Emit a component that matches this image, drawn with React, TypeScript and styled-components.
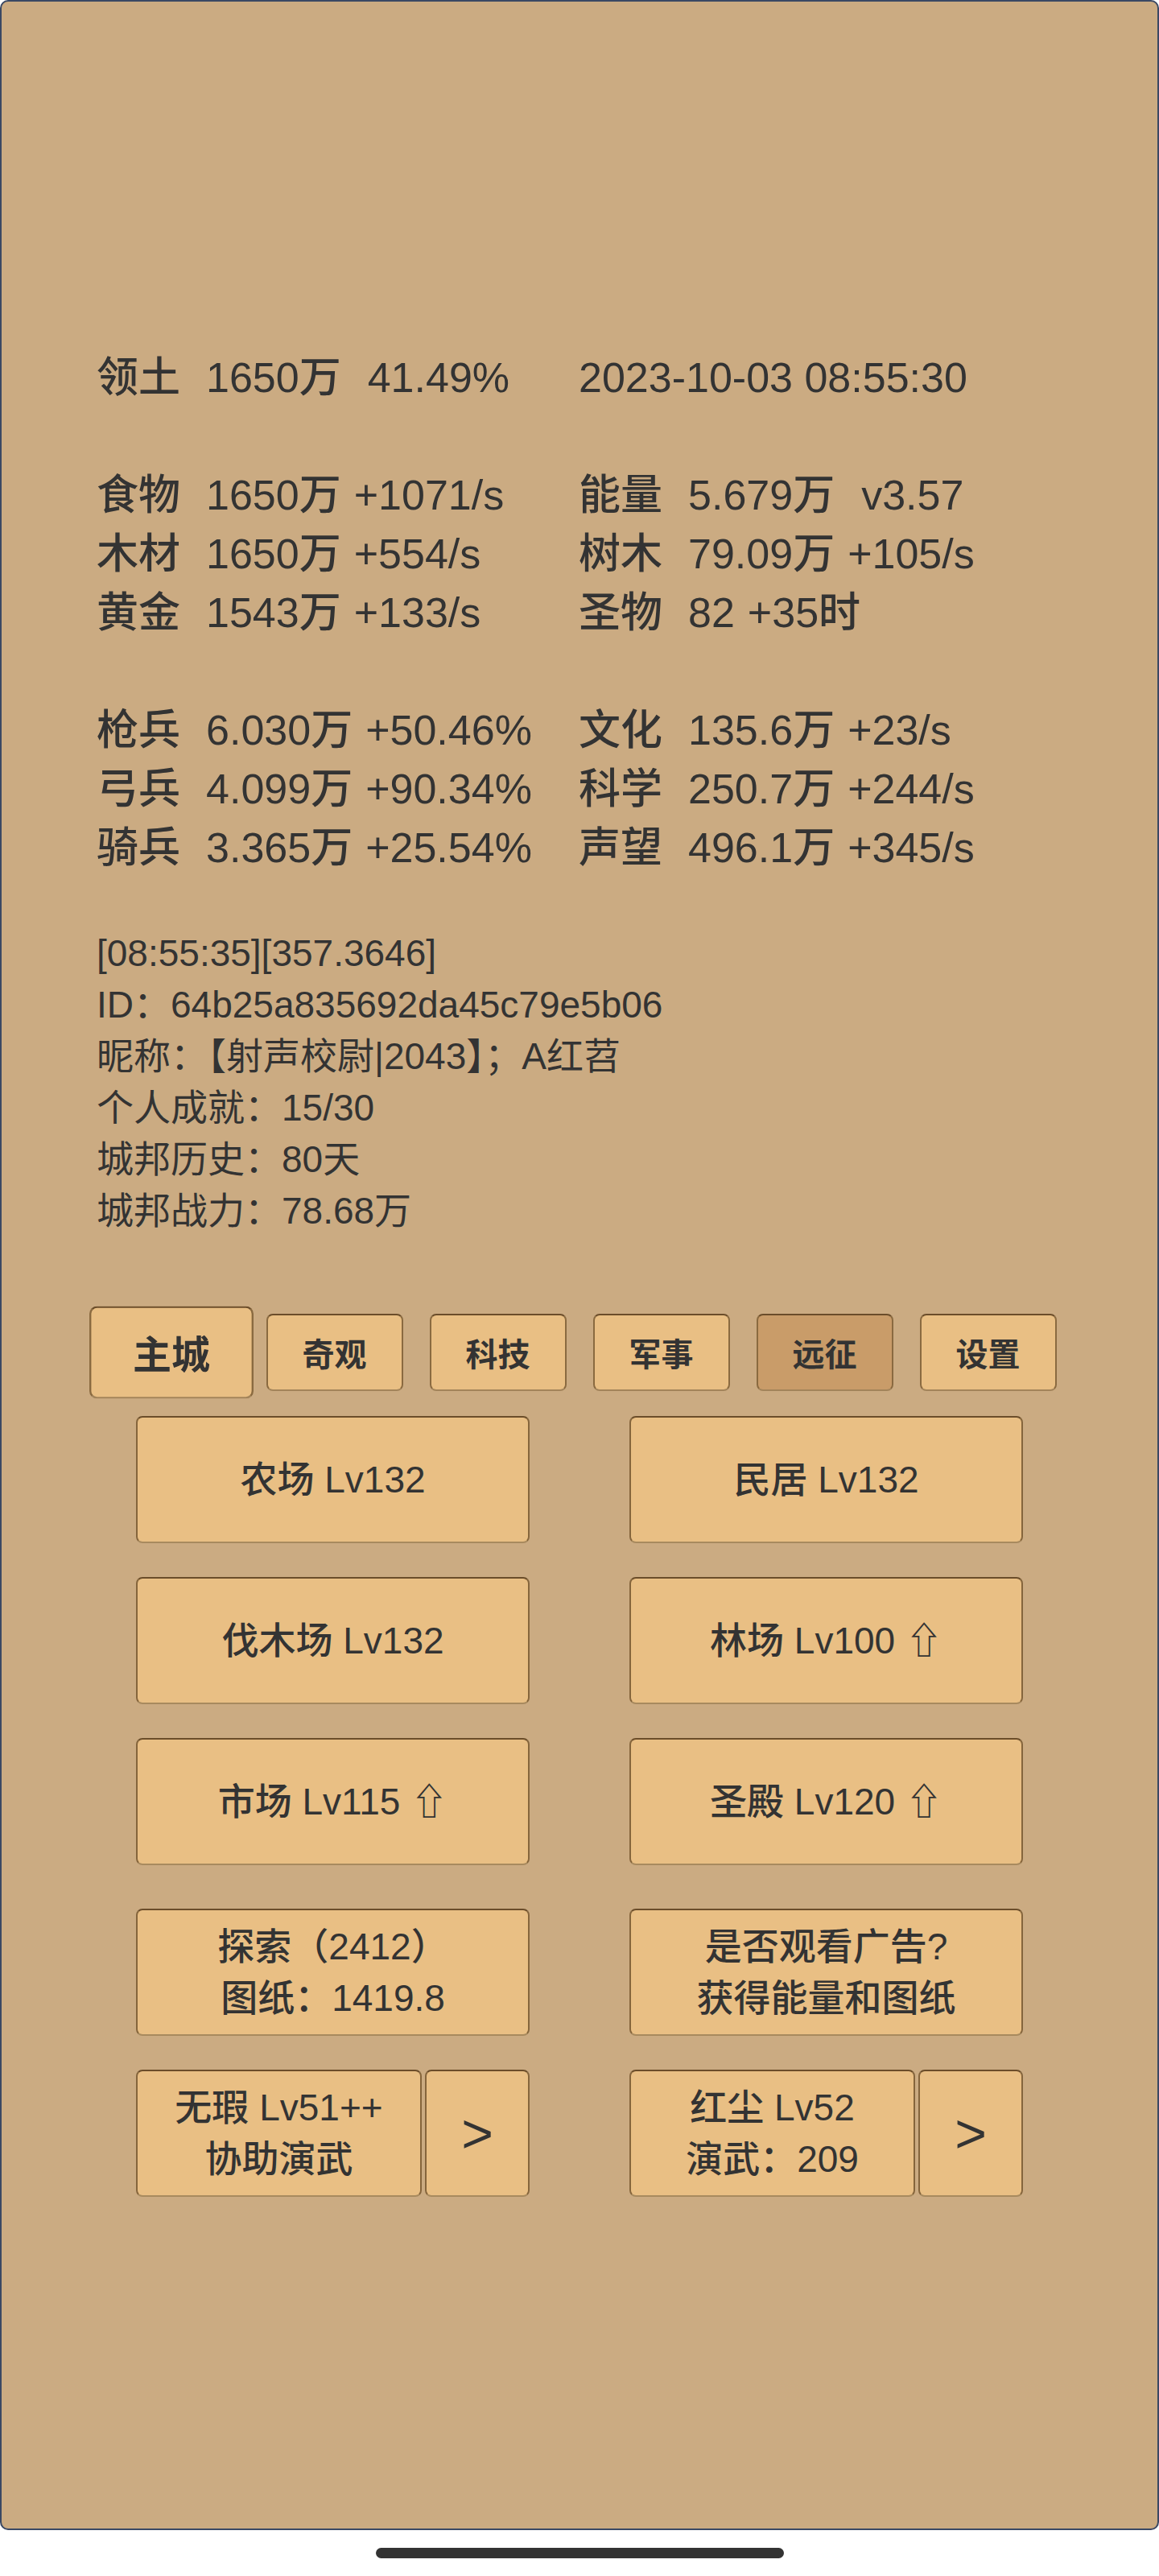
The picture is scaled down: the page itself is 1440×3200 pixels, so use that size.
import React from 'react';
import styled, { createGlobalStyle } from 'styled-components';

const GlobalStyle = createGlobalStyle`
    html, body {
        margin: 0;
        padding: 0;
        background: #ffffff;
    }
    body {
        font-family: "Liberation Sans", "Noto Sans CJK SC", sans-serif;
        color: #333333;
    }
    * {
        box-sizing: border-box;
    }
`;

const Page = styled.div`
    width: 1440px;
`;

const Screen = styled.div`
    height: 3143px;
    border: 2px solid #3a4864;
    border-radius: 10px;
    background: #cbab82;
    padding-top: 431px;
`;

const Stats = styled.div`
    padding-left: 118px;
    font-size: 52px;
    font-weight: 500;
    line-height: 73px;
`;

const StatGroup = styled.div`
    & + & {
        margin-top: 73px;
    }
`;

const StatRow = styled.div`
    display: grid;
    grid-template-columns: 599px auto;
    white-space: pre;
`;

const Cell = styled.div`
    display: flex;
`;

const Label = styled.span`
    margin-right: 32px;
`;

const Extra = styled.span<{ $gap: number }>`
    margin-left: ${(p) => p.$gap}px;
`;

const Info = styled.div`
    margin-top: 62px;
    padding-left: 118px;
    font-size: 46px;
    line-height: 64px;
`;

const Tabs = styled.div`
    display: flex;
    justify-content: center;
    gap: 33px;
    margin-top: 96px;
`;

const Tab = styled.button<{ $active?: boolean; $dim?: boolean }>`
    width: 170px;
    height: 96px;
    padding: 0;
    font: inherit;
    font-size: 40px;
    font-weight: bold;
    color: #333333;
    background: ${(p) => (p.$dim ? '#c99c69' : '#e9bf84')};
    border: 2px solid #8a6a40;
    border-top-color: #6b4d2a;
    border-bottom-color: #a3845a;
    border-radius: 8px;
    transform: ${(p) => (p.$active ? 'scale(1.2)' : 'none')};
`;

const ButtonGrid = styled.div<{ $top: number }>`
    display: grid;
    grid-template-columns: repeat(2, 489px);
    justify-content: center;
    column-gap: 124px;
    row-gap: 42px;
    margin-top: ${(p) => p.$top}px;
`;

const Split = styled.div`
    display: flex;
    gap: 4px;
`;

const GameButton = styled.button`
    flex: 1;
    height: 158px;
    padding: 0;
    display: flex;
    flex-direction: column;
    align-items: center;
    justify-content: center;
    font: inherit;
    font-size: 46px;
    font-weight: 500;
    line-height: 64px;
    color: #333333;
    background: #e9bf84;
    border: 2px solid #85653c;
    border-top-color: #6b4d2a;
    border-bottom-color: #a88a5e;
    border-radius: 8px;
    white-space: pre;
`;

const ArrowButton = styled(GameButton)`
    flex: 0 0 130px;
    font-size: 68px;
`;

const HomeArea = styled.div`
    height: 57px;
    display: flex;
    align-items: center;
    justify-content: center;
`;

const HomeBar = styled.div`
    width: 507px;
    height: 13px;
    border-radius: 7px;
    background: #333333;
`;

type StatCell = { label?: string; value: string; extra?: string; gap?: number };

const statGroups: [StatCell, StatCell][][] = [
    [
        [
            { label: '领土', value: '1650万', extra: '41.49%', gap: 33 },
            { value: '2023-10-03 08:55:30' },
        ],
    ],
    [
        [
            { label: '食物', value: '1650万', extra: '+1071/s', gap: 16 },
            { label: '能量', value: '5.679万', extra: 'v3.57', gap: 33 },
        ],
        [
            { label: '木材', value: '1650万', extra: '+554/s', gap: 16 },
            { label: '树木', value: '79.09万', extra: '+105/s', gap: 16 },
        ],
        [
            { label: '黄金', value: '1543万', extra: '+133/s', gap: 16 },
            { label: '圣物', value: '82', extra: '+35时', gap: 16 },
        ],
    ],
    [
        [
            { label: '枪兵', value: '6.030万', extra: '+50.46%', gap: 16 },
            { label: '文化', value: '135.6万', extra: '+23/s', gap: 16 },
        ],
        [
            { label: '弓兵', value: '4.099万', extra: '+90.34%', gap: 16 },
            { label: '科学', value: '250.7万', extra: '+244/s', gap: 16 },
        ],
        [
            { label: '骑兵', value: '3.365万', extra: '+25.54%', gap: 16 },
            { label: '声望', value: '496.1万', extra: '+345/s', gap: 16 },
        ],
    ],
];

const infoLines = [
    '[08:55:35][357.3646]',
    'ID：64b25a835692da45c79e5b06',
    '昵称：【射声校尉|2043】；A红苕',
    '个人成就：15/30',
    '城邦历史：80天',
    '城邦战力：78.68万',
];

const tabs = [
    { name: '主城', active: true },
    { name: '奇观' },
    { name: '科技' },
    { name: '军事' },
    { name: '远征', dim: true },
    { name: '设置' },
];

const buildings = ['农场 Lv132', '民居 Lv132', '伐木场 Lv132', '林场 Lv100 ⇧', '市场 Lv115 ⇧', '圣殿 Lv120 ⇧'];

const renderCell = (cell: StatCell) => (
    <Cell>
        {cell.label && <Label>{cell.label}</Label>}
        <span>{cell.value}</span>
        {cell.extra && <Extra $gap={cell.gap ?? 16}>{cell.extra}</Extra>}
    </Cell>
);

export default function App() {
    return (
        <Page>
            <GlobalStyle />
            <Screen>
                <Stats>
                    {statGroups.map((group, gi) => (
                        <StatGroup key={gi}>
                            {group.map(([left, right], ri) => (
                                <StatRow key={ri}>
                                    {renderCell(left)}
                                    {renderCell(right)}
                                </StatRow>
                            ))}
                        </StatGroup>
                    ))}
                </Stats>

                <Info>
                    {infoLines.map((line) => (
                        <div key={line}>{line}</div>
                    ))}
                </Info>

                <Tabs>
                    {tabs.map((t) => (
                        <Tab key={t.name} $active={t.active} $dim={t.dim}>
                            {t.name}
                        </Tab>
                    ))}
                </Tabs>

                <ButtonGrid $top={31}>
                    {buildings.map((b) => (
                        <GameButton key={b}>{b}</GameButton>
                    ))}
                </ButtonGrid>

                <ButtonGrid $top={54}>
                    <GameButton>
                        <span>探索（2412）</span>
                        <span>图纸：1419.8</span>
                    </GameButton>
                    <GameButton>
                        <span>是否观看广告?</span>
                        <span>获得能量和图纸</span>
                    </GameButton>
                    <Split>
                        <GameButton>
                            <span>无瑕 Lv51++</span>
                            <span>协助演武</span>
                        </GameButton>
                        <ArrowButton>&gt;</ArrowButton>
                    </Split>
                    <Split>
                        <GameButton>
                            <span>红尘 Lv52</span>
                            <span>演武：209</span>
                        </GameButton>
                        <ArrowButton>&gt;</ArrowButton>
                    </Split>
                </ButtonGrid>
            </Screen>
            <HomeArea>
                <HomeBar />
            </HomeArea>
        </Page>
    );
}
